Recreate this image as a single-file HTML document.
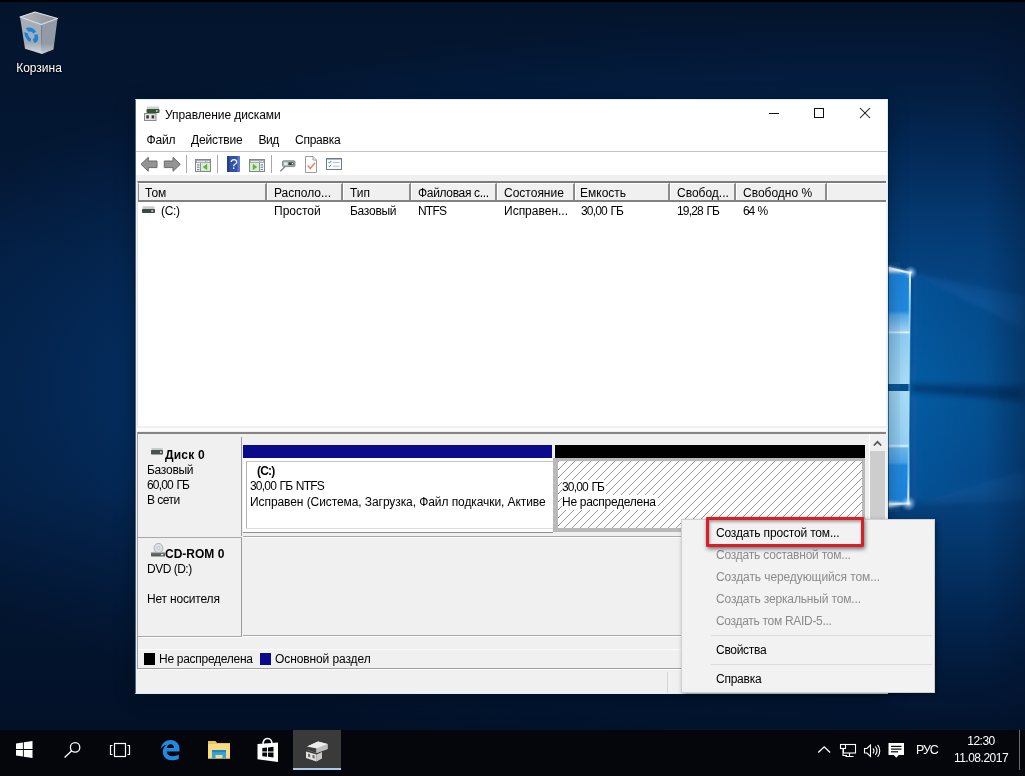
<!DOCTYPE html>
<html lang="ru">
<head>
<meta charset="utf-8">
<title>Управление дисками</title>
<style>
*{box-sizing:border-box;margin:0;padding:0}
html,body{width:1025px;height:776px;overflow:hidden;background:#07142e}
body{font-family:"Liberation Sans",sans-serif;font-size:12px;color:#000;position:relative}
.abs{position:absolute}
#desk{position:absolute;left:0;top:0;width:1025px;height:776px;overflow:hidden;background:#041936}
#desk .g1{position:absolute;left:0;top:0;width:1025px;height:776px;
 background:
  linear-gradient(to bottom, rgba(1,10,28,0) 63%, rgba(1,10,28,.55) 94%),
  linear-gradient(to bottom, rgba(2,12,30,.38) 0%, rgba(2,12,30,.22) 14%, rgba(2,12,30,0) 33%),
  radial-gradient(ellipse 1100px 375px at 870px 388px, #055291 0%, #054b89 12%, #05427f 30%, #043a72 48%, #032e61 64%, #04244d 78%, #041e42 90%, #041936 100%);}
#desk .topblack{position:absolute;left:0;top:0;width:1025px;height:3px;background:linear-gradient(#000 0,#000 1px,rgba(0,0,0,0) 3px)}
.t{position:absolute;white-space:nowrap;line-height:14px}
/* window */
#win{will-change:transform;position:absolute;left:135px;top:99px;width:753px;height:595px;background:#fff;border:1px solid #d8f1f8;border-left-color:#4f6a86;box-shadow:0 0 0 1px rgba(2,20,55,.55),0 4px 18px rgba(0,0,0,.35)}
#menubar{position:absolute;left:0;top:29px;width:751px;height:22px;background:#fff}
#tbline{position:absolute;left:0;top:51px;width:751px;height:1px;background:#c4c4c4}
#toolbar{position:absolute;left:0;top:52px;width:751px;height:23px;background:#fff}
#client{position:absolute;left:0;top:75px;width:751px;height:518px;background:#f0f0f0}
#list{position:absolute;left:1px;top:6px;width:749px;height:245px;background:#fff;border-top:2px solid #7c7c7c;border-left:1px solid #e3e3e3}
#lhead{position:absolute;left:0;top:0;width:748px;height:19px;background:#f0f0f0;border-bottom:2px solid #828282}
.hc{position:absolute;top:0;height:17px;border-left:1px solid #fff;border-top:1px solid #fff;border-right:2px solid #8c8c8c;background:#f0f0f0}
.hc span{position:absolute;left:6px;top:2px;line-height:14px;white-space:nowrap}
.r{top:21px}
.b{font-weight:bold}
.wb{background:#fff;line-height:15px;height:15px}
#lower{position:absolute;left:1px;top:257px;width:749px;height:237px;background:#f0f0f0;border-top:2px solid #858585;border-left:1px solid #a0a0a0;border-bottom:1px solid #a0a0a0}
.dlabel{position:absolute;left:1px;width:103px;background:#f0f0f0;border-right:1px solid #9c9c9c}
.bar{position:absolute;top:11px;height:13px}
.part{position:absolute;top:24px;height:74px;overflow:hidden}
.p1{background:#fff;border-bottom:1px solid #929292;height:75px}
.p1 .in{position:absolute;left:3px;top:3px;right:0;height:68px;border-left:1px solid #b0b0b0;border-top:1px solid #c6c6c0;border-bottom:1px solid #dedede}
.p2{border:3px solid #b9b9b9;border-left-width:5px;border-bottom-width:4px}
.hatch{background:#fff repeating-linear-gradient(135deg,#fff 0,#fff .05px,#949494 .05px,#949494 1.05px,#fff 1.05px,#fff 5.657px)}
.rowline{position:absolute;left:0;width:731px;height:2px;background:#fff;border-top:1px solid #a8a8a8}
#vscroll{position:absolute;left:731px;top:0;width:17px;height:204px;background:#f0f0f0;border-left:1px solid #fff}
#vscroll .thumb{position:absolute;left:0;top:17px;width:15px;height:70px;background:#cdcdcd}
#status{position:absolute;left:0;top:494px;width:751px;height:24px;background:#f0f0f0;border-top:1px solid #fff}
#ctx{will-change:transform;position:absolute;left:681px;top:519px;width:254px;height:174px;background:#f2f2f2;border:1px solid #cfcfcf;box-shadow:2px 2px 5px rgba(0,0,0,.4)}
.mi{left:34px}
.dis{color:#8b8b8b}
.msep{position:absolute;left:29px;width:221px;height:1px;background:#dcdcdc}
#redbox{position:absolute;left:706px;top:517px;width:158px;height:30px;border:3px solid #d81f26;border-radius:1px;box-shadow:1px 2px 4px rgba(0,0,0,.55), inset 1px 2px 3px rgba(0,0,0,.35)}
.dlab{will-change:transform;color:#fff;text-shadow:0 1px 2px rgba(0,0,0,.9),0 0 2px rgba(0,0,0,.7)}
#taskbar{position:absolute;left:0;top:730px;width:1025px;height:46px;background:#04060b}
#taskbar .active{position:absolute;left:293px;top:0;width:48px;height:40px;background:#3a3a3a;border-bottom:2px solid #a5cbee}
.tw{color:#fff;letter-spacing:-.5px;will-change:transform}
</style>
</head>
<body>
<div id="desk">
 <div class="g1"></div>
<svg class="abs" style="left:0;top:0" width="1025" height="776" viewBox="0 0 1025 776">
  <defs>
   <linearGradient id="pU" gradientUnits="userSpaceOnUse" x1="0" y1="273" x2="0" y2="384"><stop offset="0" stop-color="#1a84dc"/><stop offset=".34" stop-color="#2089df"/><stop offset=".38" stop-color="#58a9e7"/><stop offset=".52" stop-color="#a0d4f5"/><stop offset=".535" stop-color="#e6f6fe"/><stop offset=".55" stop-color="#8fcdf2"/><stop offset="1" stop-color="#aadef8"/></linearGradient>
   <linearGradient id="pL" gradientUnits="userSpaceOnUse" x1="0" y1="391" x2="0" y2="504"><stop offset="0" stop-color="#aadef8"/><stop offset=".47" stop-color="#98d2f4"/><stop offset=".487" stop-color="#e6f6fe"/><stop offset=".505" stop-color="#6ab8ec"/><stop offset=".63" stop-color="#4aa5e7"/><stop offset=".66" stop-color="#2089df"/><stop offset="1" stop-color="#1a84dc"/></linearGradient>
   <linearGradient id="bm" x1="0" y1="0" x2="1" y2="0"><stop offset="0" stop-color="#1478d2" stop-opacity=".30"/><stop offset=".5" stop-color="#1478d2" stop-opacity=".14"/><stop offset="1" stop-color="#1478d2" stop-opacity="0"/></linearGradient>
   <linearGradient id="edge" gradientUnits="userSpaceOnUse" x1="0" y1="272" x2="0" y2="504"><stop offset="0" stop-color="#f4fcff" stop-opacity="1"/><stop offset=".12" stop-color="#a8e2fb" stop-opacity=".85"/><stop offset=".3" stop-color="#a8e2fb" stop-opacity=".35"/><stop offset=".7" stop-color="#a8e2fb" stop-opacity=".35"/><stop offset=".88" stop-color="#a8e2fb" stop-opacity=".85"/><stop offset="1" stop-color="#f4fcff" stop-opacity="1"/></linearGradient>
   <radialGradient id="gl"><stop offset="0" stop-color="#fff" stop-opacity="1"/><stop offset=".3" stop-color="#cfe8ff" stop-opacity=".6"/><stop offset="1" stop-color="#6bb6ff" stop-opacity="0"/></radialGradient>
   <linearGradient id="vg" x1="0" y1="0" x2="1" y2="0"><stop offset="0" stop-color="#03102a" stop-opacity="0"/><stop offset="1" stop-color="#03102a" stop-opacity=".3"/></linearGradient>
   <filter id="bl"><feGaussianBlur stdDeviation="3"/></filter><filter id="bl2" x="-20%" y="-100%" width="140%" height="300%"><feGaussianBlur stdDeviation="1.600"/></filter>
  </defs>
  <g filter="url(#bl)">
   <path d="M910 273 L1025 310 L1025 486 L908 504 Z" fill="url(#bm)"/>
   <path d="M911 272 L1025 296 L1025 330 Z" fill="#3a93e6" opacity=".12"/>
   <path d="M909 506 L1025 470 L1025 500 Z" fill="#3a93e6" opacity=".10"/>
   <path d="M911 383 L1025 386 L1025 402 L911 393 Z" fill="#04204a" opacity=".5"/>
  </g>
  <rect x="985" y="0" width="40" height="776" fill="url(#vg)"/>
  <path d="M860 261.500 L910.500 273 L909.500 384 L860 384 Z" fill="url(#pU)"/>
  <path d="M860 391 L909.500 391 L908.300 503.500 L860 505 Z" fill="url(#pL)"/>
  <rect x="860" y="262" width="40" height="250" fill="#3b8fd8" opacity=".12"/>
  <g filter="url(#bl2)">
   <path d="M870 262 L911 272.500 L870 272 Z" fill="#e8f8ff" opacity=".95"/>
   <path d="M870 500 L909 503.500 L870 511 Z" fill="#e8f8ff" opacity=".9"/>
  </g>
  <path d="M860 261.500 L910.500 273" stroke="#eefaff" stroke-width="2.200" opacity=".95"/>
  <path d="M860 505 L908.500 503.500" stroke="#e6f6ff" stroke-width="1.800" opacity=".9"/>
  <path d="M910 272.500 L908.300 504" stroke="url(#edge)" stroke-width="2"/>
  <circle cx="910.500" cy="272.500" r="7" fill="url(#gl)"/>
  <circle cx="908.500" cy="503.500" r="8" fill="url(#gl)"/>
 </svg>
 <div class="topblack"></div>
</div>
<div id="win">
 <!-- title bar -->
 <svg class="abs" style="left:8px;top:6px" width="17" height="16" viewBox="0 0 17 16">
  <rect x="3" y="0.5" width="12" height="3" fill="#d9c9d3"/>
  <rect x="2.5" y="3" width="13" height="4" rx="1" fill="#2d5a33"/>
  <rect x="12" y="4.3" width="1.6" height="1.4" fill="#e8f4e8"/>
  <rect x="0.5" y="7.5" width="11.5" height="7" fill="#e4e4e4" stroke="#8a8a8a" stroke-width="1"/>
  <rect x="2.3" y="9.3" width="2.6" height="3.2" fill="#3a3a3a"/>
  <rect x="7.6" y="9.3" width="2.6" height="3.2" fill="#3a3a3a"/>
 </svg>
 <div class="t" style="left:29px;top:8px;letter-spacing:-.07px">Управление дисками</div>
 <svg class="abs" style="left:626px;top:-1px" width="127" height="30" viewBox="0 0 127 30">
  <g stroke="#111" stroke-width="1" fill="none" shape-rendering="crispEdges">
   <line x1="7" y1="14.5" x2="17" y2="14.5"/>
   <rect x="52.5" y="9.5" width="9" height="9"/>
  </g>
  <g stroke="#111" stroke-width="1.05" fill="none">
   <line x1="98" y1="9" x2="108" y2="19"/><line x1="108" y1="9" x2="98" y2="19"/>
  </g>
 </svg>
 <div id="menubar">
  <div class="t" style="left:10.5px;top:4px;letter-spacing:-.2px">Файл</div>
  <div class="t" style="left:55px;top:4px;letter-spacing:-.15px">Действие</div>
  <div class="t" style="left:122.5px;top:4px;letter-spacing:-.5px">Вид</div>
  <div class="t" style="left:159px;top:4px;letter-spacing:-.24px">Справка</div>
 </div>
 <div id="tbline"></div>
 <div id="toolbar">
  <svg class="abs" style="left:0;top:0" width="220" height="23" viewBox="0 0 220 23">
   <!-- back / forward arrows -->
   <path d="M5 12.3 L12.3 5.3 V9 H21 V15.6 H12.3 V19.3 Z" fill="#949494" stroke="#6a6a6a" stroke-width="1" stroke-linejoin="round"/>
   <path d="M44.3 12.3 L37 5.3 V9 H28.3 V15.6 H37 V19.3 Z" fill="#949494" stroke="#6a6a6a" stroke-width="1" stroke-linejoin="round"/>
   <rect x="50" y="3" width="1" height="18" fill="#a9a9a9"/>
   <!-- show/hide tree -->
   <g>
    <rect x="59.500" y="7.500" width="15" height="12" fill="#f6f7f8" stroke="#7f8790"/>
    <rect x="60" y="8" width="14" height="3" fill="#a4adb6"/>
    <rect x="61" y="9" width="8" height="1" fill="#e4e8ec"/><rect x="70.500" y="9" width="1" height="1" fill="#fff"/><rect x="72.200" y="9" width="1" height="1" fill="#fff"/>
    <rect x="65" y="11" width="9" height="8" fill="#d9efc9"/>
    <line x1="64.500" y1="11" x2="64.500" y2="19" stroke="#8b939b"/>
    <rect x="61" y="12.300" width="2.500" height="1.200" fill="#7f8790"/><rect x="61" y="14.600" width="2.500" height="1.200" fill="#7f8790"/><rect x="61" y="16.900" width="2.500" height="1.200" fill="#7f8790"/>
    <path d="M67.300 15 L70.800 12.400 V17.600 Z" fill="#5fb548" stroke="#3d962c" stroke-width=".5"/>
   </g>
   <rect x="81" y="3" width="1" height="18" fill="#a9a9a9"/>
   <!-- help -->
   <g>
    <rect x="91" y="4" width="13" height="16" fill="#3151ab"/>
    <rect x="91" y="4" width="2.500" height="16" fill="#24407f"/>
    <rect x="101.500" y="4" width="2.500" height="16" fill="#5b79cc"/>
    <text x="98" y="16.800" font-family="Liberation Sans" font-size="14" fill="#f4f6ff" text-anchor="middle">?</text>
   </g>
   <!-- show/hide action pane -->
   <g>
    <rect x="113.500" y="7.500" width="15" height="12" fill="#f6f7f8" stroke="#7f8790"/>
    <rect x="114" y="8" width="14" height="3" fill="#a4adb6"/>
    <rect x="115" y="9" width="8" height="1" fill="#e4e8ec"/><rect x="124.500" y="9" width="1" height="1" fill="#fff"/><rect x="126.200" y="9" width="1" height="1" fill="#fff"/>
    <rect x="114" y="11" width="9" height="8" fill="#d9efc9"/>
    <line x1="123.500" y1="11" x2="123.500" y2="19" stroke="#8b939b"/>
    <rect x="124.600" y="12.300" width="2.500" height="1.200" fill="#7f8790"/><rect x="124.600" y="14.600" width="2.500" height="1.200" fill="#7f8790"/><rect x="124.600" y="16.900" width="2.500" height="1.200" fill="#7f8790"/>
    <path d="M120.700 15 L117.200 12.400 V17.600 Z" fill="#5fb548" stroke="#3d962c" stroke-width=".5"/>
   </g>
   <rect x="135" y="3" width="1" height="18" fill="#a9a9a9"/>
   <!-- disk + magnifier -->
   <g>
    <line x1="144.300" y1="19.200" x2="149" y2="14.800" stroke="#7d8a96" stroke-width="1.300"/>
    <rect x="146.500" y="8.800" width="12.500" height="5.800" rx="1" fill="#a3b1ab" stroke="#6d7a75" stroke-width=".8"/>
    <rect x="148" y="10.300" width="3.500" height="2.800" fill="#e4ebef"/>
    <rect x="152.500" y="10.300" width="5" height="2.800" fill="#33453a"/>
    <rect x="155.800" y="11" width="1.200" height="1.400" fill="#d8f6d8"/>
   </g>
   <!-- page with check -->
   <g>
    <path d="M169.500 4.500 H177 L180.500 8 V20.500 H169.500 Z" fill="#fff" stroke="#9c9c9c"/>
    <path d="M177 4.500 V8 H180.500" fill="#f0f0f0" stroke="#9c9c9c"/>
    <path d="M171.800 13.500 L174.300 16.500 L179 10.800" fill="none" stroke="#e88a5c" stroke-width="1.500"/>
   </g>
   <!-- checklist -->
   <g>
    <rect x="190.500" y="6.500" width="15" height="11" fill="#f9fbfd" stroke="#6f7b88"/>
    <rect x="190.500" y="6.500" width="15" height="1" fill="#6f7b88"/>
    <path d="M192.500 10 l1 1 l1.700 -2" fill="none" stroke="#3b86d6" stroke-width="1"/>
    <path d="M192.500 13.800 l1 1 l1.700 -2" fill="none" stroke="#3b86d6" stroke-width="1"/>
    <rect x="197" y="10" width="6.500" height="1" fill="#b7c2cd"/>
    <rect x="197" y="13.800" width="6.500" height="1" fill="#b7c2cd"/>
   </g>
  </svg>
 </div>
 <div id="client">
  <!-- list view -->
  <div id="list">
   <div id="lhead">
    <div class="hc" style="left:0;width:129px;border-left:1px solid #8a8a8a"><span>Том</span></div>
    <div class="hc" style="left:129px;width:76px"><span>Располо...</span></div>
    <div class="hc" style="left:205px;width:68px"><span>Тип</span></div>
    <div class="hc" style="left:273px;width:86px"><span style="letter-spacing:-.33px">Файловая с...</span></div>
    <div class="hc" style="left:359px;width:78px"><span>Состояние</span></div>
    <div class="hc" style="left:437px;width:95px"><span style="left:4px">Емкость</span></div>
    <div class="hc" style="left:532px;width:66px"><span>Свобод...</span></div>
    <div class="hc" style="left:598px;width:91px"><span>Свободно %</span></div>
    <div class="hc" style="left:689px;width:60px;border-right:none"></div>
   </div>
   <svg class="abs" style="left:4px;top:23px" width="13" height="8" viewBox="0 0 13 8">
    <rect x="0.5" y="0.3" width="12" height="3" fill="#c9cdca"/>
    <rect x="0" y="3" width="13" height="4" rx=".8" fill="#3f4742"/>
    <rect x="9.3" y="4.3" width="2" height="1.4" fill="#d6f3d6"/>
   </svg>
   <div class="t r" style="left:23px;letter-spacing:-.35px">(C:)</div>
   <div class="t r" style="left:136px">Простой</div>
   <div class="t r" style="left:212px;letter-spacing:-.27px">Базовый</div>
   <div class="t r" style="left:280px;letter-spacing:-.8px">NTFS</div>
   <div class="t r" style="left:366px">Исправен...</div>
   <div class="t r" style="left:443px;letter-spacing:-.85px;word-spacing:1.2px">30,00 ГБ</div>
   <div class="t r" style="left:539px;letter-spacing:-.85px;word-spacing:1.2px">19,28 ГБ</div>
   <div class="t r" style="left:605px;letter-spacing:-1.1px;word-spacing:1px">64 %</div>
  </div>
  <div class="abs" style="left:1px;top:253px;width:749px;height:3px;background:#fbfbfb"></div>
  <!-- lower graphical pane -->
  <div id="lower">
   <!-- Disk 0 row -->
   <div class="dlabel" style="top:3px;height:99px">
    <svg class="abs" style="left:12px;top:11px" width="12" height="8" viewBox="0 0 16 8" preserveAspectRatio="none">
     <rect x="0.500" y="0" width="15" height="2.500" fill="#c9cdca"/>
     <rect x="0" y="2" width="16" height="4.500" rx="1" fill="#4b524d"/>
     <rect x="12" y="3.400" width="2.200" height="1.500" fill="#d6f3d6"/>
    </svg>
    <div class="t b" style="left:26px;top:11px;letter-spacing:.2px">Диск 0</div>
    <div class="t" style="left:8px;top:26px;letter-spacing:-.27px">Базовый</div>
    <div class="t" style="left:8px;top:41px;letter-spacing:-.85px;word-spacing:1.2px">60,00 ГБ</div>
    <div class="t" style="left:8px;top:56px;letter-spacing:-.5px">В сети</div>
   </div>
   <div class="bar" style="left:105px;width:309px;background:#0a0a8a"></div>
   <div class="bar" style="left:417px;width:310px;background:#000"></div>
   <div class="part p1" style="left:105px;width:310px"><div class="in"></div>
    <div class="t b" style="left:14px;top:6px;letter-spacing:-.8px">(C:)</div>
    <div class="t" style="left:7px;top:21px;letter-spacing:-.8px;word-spacing:1px">30,00 ГБ NTFS</div>
    <div class="t" style="left:7px;top:37px;letter-spacing:-.08px;width:295px;overflow:hidden">Исправен (Система, Загрузка, Файл подкачки, Активен, Аварийный дамп)</div>
   </div>
   <div class="part p2 hatch" style="left:415px;width:312px">
    <div class="t wb" style="left:4px;top:19px;width:44px;letter-spacing:-.85px;word-spacing:1.2px">30,00 ГБ</div>
    <div class="t wb" style="left:4px;top:34px;width:96px;letter-spacing:-.28px">Не распределена</div>
   </div>
   <div class="rowline" style="top:103px;width:104px"></div><div class="rowline" style="top:102px;left:105px;width:626px"></div>
   <!-- CD-ROM 0 row -->
   <div class="dlabel" style="top:104px;height:98px">
    <svg class="abs" style="left:12px;top:5px" width="14" height="15" viewBox="0 0 16 16" preserveAspectRatio="none">
     <circle cx="8.500" cy="5.500" r="5" fill="#dfe3e6" stroke="#8e979e" stroke-width=".8"/>
     <circle cx="8.500" cy="5.500" r="1.600" fill="#fff" stroke="#8e979e" stroke-width=".7"/>
     <rect x="0" y="9.500" width="16" height="5" rx="1" fill="#5a615c"/>
     <rect x="0" y="9.500" width="16" height="1.400" fill="#a9b0ab"/>
     <rect x="11.500" y="11.700" width="2.500" height="1.400" fill="#d6f3d6"/>
    </svg>
    <div class="t b" style="left:26px;top:9px">CD-ROM 0</div>
    <div class="t" style="left:8px;top:24px;letter-spacing:-.5px">DVD (D:)</div>
    <div class="t" style="left:8px;top:54px;letter-spacing:-.18px">Нет носителя</div>
   </div>
   <div class="rowline" style="top:202px;width:104px"></div><div class="rowline" style="top:201px;left:105px;width:626px"></div>
   <!-- scrollbar -->
   <div id="vscroll">
    <svg class="abs" style="left:3px;top:6px" width="9" height="7" viewBox="0 0 9 7"><path d="M0.800 5.500 L4.500 1.800 L8.200 5.500" fill="none" stroke="#555" stroke-width="1.700"/></svg>
    <div class="thumb"></div>
   </div>
   <!-- legend -->
   <div class="abs" style="left:0;top:215px;width:748px;height:1px;background:#fbfbfb"></div>
   <div class="abs" style="left:6px;top:219px;width:11px;height:12px;background:#000"></div>
   <div class="t" style="left:21px;top:218px;letter-spacing:-.28px">Не распределена</div>
   <div class="abs" style="left:122px;top:219px;width:11px;height:12px;background:#0a0a8a"></div>
   <div class="t" style="left:137px;top:218px;letter-spacing:-.1px">Основной раздел</div>
  </div>
  <!-- status bar -->
  <div id="status">
   <div class="abs" style="left:531px;top:2px;width:1px;height:21px;background:#d4d4d4"></div>
   <div class="abs" style="left:700px;top:2px;width:1px;height:20px;background:#d0d0d0"></div>
  </div>
 </div>
</div>
<!--WINEND-->
<div id="ctx">
 <div class="t mi" style="top:6px;letter-spacing:-.17px">Создать простой том...</div>
 <div class="t mi dis" style="top:28px;letter-spacing:-.21px">Создать составной том...</div>
 <div class="t mi dis" style="top:50px;letter-spacing:-.09px">Создать чередующийся том...</div>
 <div class="t mi dis" style="top:72px;letter-spacing:-.15px">Создать зеркальный том...</div>
 <div class="t mi dis" style="top:94px;letter-spacing:-.3px">Создать том RAID-5...</div>
 <div class="msep" style="top:115px"></div>
 <div class="t mi" style="top:123px;letter-spacing:-.29px">Свойства</div>
 <div class="msep" style="top:144px"></div>
 <div class="t mi" style="top:152px;letter-spacing:-.24px">Справка</div>
</div>
<div id="redbox"></div>
<!--MENUEND-->
<!-- recycle bin -->
<svg class="abs" style="left:16px;top:8px" width="48" height="50" viewBox="0 0 48 50">
 <defs>
  <linearGradient id="binL" x1="0" y1="0" x2="0" y2="1"><stop offset="0" stop-color="#aeb5bd"/><stop offset=".7" stop-color="#aab2bb"/><stop offset=".86" stop-color="#c6ccd2"/><stop offset="1" stop-color="#e2e6e9"/></linearGradient>
  <linearGradient id="binR" x1="0" y1="0" x2="0" y2="1"><stop offset="0" stop-color="#98a1ab"/><stop offset=".7" stop-color="#97a0aa"/><stop offset=".88" stop-color="#b4bbc2"/><stop offset="1" stop-color="#d5dade"/></linearGradient>
  <linearGradient id="binT" x1="0" y1="0" x2="1" y2="0"><stop offset="0" stop-color="#b4b9be"/><stop offset="1" stop-color="#8a9097"/></linearGradient>
 </defs>
 <path d="M4 9 L25.300 16.500 L26 46 L9 40.800 Z" fill="url(#binL)" opacity=".96"/>
 <path d="M25.300 16.500 L41.500 10.500 L37.500 41.500 L26 46 Z" fill="url(#binR)" opacity=".96"/>
 <path d="M4 9 L19 4 L41.500 10.500 L25.300 16.500 Z" fill="url(#binT)" stroke="#dfe3e7" stroke-width="1.100" stroke-linejoin="round"/>
 <g transform="translate(15.300 27.300) skewY(17)">
  <ellipse cx="0" cy="0" rx="5" ry="5.600" fill="none" stroke="#1c82d8" stroke-width="3.800" stroke-dasharray="8.300 2.850" transform="rotate(-25)"/>
 </g>
</svg>
<div class="t dlab" style="left:16px;top:61px;width:46px;text-align:center">Корзина</div>
<!-- taskbar -->
<div id="taskbar">
 <div class="active"></div>
 <!-- start -->
 <svg class="abs" style="left:16px;top:11px" width="17" height="17" viewBox="0 0 17 17">
  <path d="M0 2.400 L6.900 1.400 V8 H0 Z M7.800 1.250 L16.500 0 V8 H7.800 Z M0 8.900 H6.900 V15.500 L0 14.500 Z M7.800 8.900 H16.500 V17 L7.800 15.700 Z" fill="#fff"/>
 </svg>
 <!-- search -->
 <svg class="abs" style="left:62px;top:9px" width="20" height="20" viewBox="0 0 20 20">
  <circle cx="13.100" cy="8.400" r="4.700" fill="none" stroke="#fff" stroke-width="1.300"/>
  <line x1="9.700" y1="11.800" x2="2.600" y2="18.500" stroke="#fff" stroke-width="1.300"/>
 </svg>
 <!-- task view -->
 <svg class="abs" style="left:108px;top:11px" width="24" height="18" viewBox="0 0 24 18">
  <rect x="6.500" y="2.500" width="11" height="13" fill="none" stroke="#fff" stroke-width="1.200"/>
  <path d="M4.500 4.500 H2.500 V13.500 H4.500 M19.500 4.500 H21.500 V13.500 H19.500" fill="none" stroke="#fff" stroke-width="1.200"/>
 </svg>
 <!-- edge -->
 <svg class="abs" style="left:159px;top:9px" width="22" height="22" viewBox="0 0 22 22">
  <path d="M1.500 10.500 C2.500 4 7 1 11.500 1 C17.500 1 20.500 5.500 20.500 10 V12.500 H7.800 C8 15.500 10.500 17.200 13.500 17.200 C16 17.200 18 16.500 19.800 15.500 V19.800 C17.800 20.800 15.500 21.300 13 21.300 C7.500 21.300 3.800 17.800 3.800 12.800 C3.800 9.800 5.300 7.300 7.800 5.800 C4.800 6.300 2.800 8 1.500 10.500 Z M7.900 9 H15 C15 6.800 13.700 5.200 11.600 5.200 C9.500 5.200 8.200 6.900 7.900 9 Z" fill="#2189e0"/>
 </svg>
 <!-- explorer -->
 <svg class="abs" style="left:207px;top:10px" width="24" height="20" viewBox="0 0 24 20">
  <path d="M1 1 H8.500 L10 3 H23 V18.500 H1 Z" fill="#e9c562"/>
  <rect x="1" y="4" width="22" height="14.500" fill="#f7dc84"/>
  <path d="M5 18.500 V11.500 H19 V18.500 H15.500 V15 H8.500 V18.500 Z" fill="#35a3dd"/>
  <rect x="5" y="10" width="14" height="2.200" fill="#1f86c4"/>
 </svg>
 <!-- store -->
 <svg class="abs" style="left:256px;top:7px" width="23" height="25" viewBox="0 0 23 25">
  <path d="M7 7.500 C7 3.500 9 1.500 11.500 1.500 C14 1.500 16 3.500 16 7.500" fill="none" stroke="#fff" stroke-width="1.400"/>
  <path d="M1.500 7 L22 5.500 V25 L1.500 22.300 Z" fill="#fff"/>
  <path d="M6.300 11 L11 10.500 V14.500 H6.300 Z M12 10.400 L17.500 9.800 V14.500 H12 Z M6.300 15.500 H11 V19.700 L6.300 19.200 Z M12 15.500 H17.500 V20.500 L12 19.800 Z" fill="#05070c"/>
 </svg>
 <!-- disk mgmt app -->
 <svg class="abs" style="left:304px;top:10px" width="26" height="22" viewBox="0 0 26 22">
  <path d="M3 6.500 L14 1.500 L23.500 4 L23.500 9 L12.500 13 L3 10 Z" fill="#d9d9d9"/>
  <path d="M3 6.500 L14 1.500 L23.500 4 L12.500 8.500 Z" fill="#ececec"/>
  <path d="M3 6.500 L12.500 8.500 V13 L3 10 Z" fill="#3c3c3c"/>
  <path d="M12.500 8.500 L23.500 4 V9 L12.500 13 Z" fill="#bdbdbd"/>
  <path d="M2 11.500 L12.500 14.500 V21.500 L2 18 Z" fill="#e3e3e3"/>
  <path d="M12.500 14.500 L18 12 V18.500 L12.500 21.500 Z" fill="#c9c9c9"/>
  <path d="M4 13.500 L6.200 14.200 V17.500 L4 16.800 Z M8.500 14.800 L10.700 15.500 V18.800 L8.500 18.100 Z" fill="#6d6d6d"/>
 </svg>
 <!-- tray -->
 <svg class="abs" style="left:816px;top:12px" width="92" height="18" viewBox="0 0 92 18">
  <path d="M2.300 10.500 L8.200 4.800 L14.100 10.500" fill="none" stroke="#fff" stroke-width="1.300"/>
  <!-- network -->
  <g fill="none" stroke="#fff" stroke-width="1.100">
   <rect x="27.500" y="2.500" width="12" height="8.500"/>
   <path d="M33.500 11 V14.500 M29.500 14.500 H37.500"/>
   <rect x="24.500" y="2.500" width="5" height="4" fill="#05070c"/>
   <path d="M27 6.500 V13.500 H31"/>
  </g>
  <!-- volume -->
  <g fill="none" stroke="#fff" stroke-width="1.100">
   <path d="M48.500 6.500 H51 L54.500 3 V14.500 L51 11 H48.500 Z"/>
   <path d="M57 6.300 C58.200 7.800 58.200 9.800 57 11.300"/>
   <path d="M59.300 4.500 C61.300 7 61.300 10.500 59.300 13"/>
   <path d="M61.600 2.800 C64.500 6.300 64.500 11.300 61.600 14.800"/>
  </g>
  <!-- notifications -->
  <path d="M72.500 1 H88 V13 H82.800 L80.300 15.800 L77.800 13 H72.500 Z" fill="#fff"/>
  <g fill="#05070c"><rect x="75" y="3.800" width="10.500" height="1.200"/><rect x="75" y="6.500" width="10.500" height="1.200"/><rect x="75" y="9.200" width="7" height="1.200"/></g>
 </svg>
 <div class="t tw" style="left:915.5px;top:13px;font-size:12.5px;letter-spacing:-1.1px">РУС</div>
 <div class="t tw" style="left:944px;top:4px;width:74px;text-align:center">12:30</div>
 <div class="t tw" style="left:944px;top:21px;width:74px;text-align:center">11.08.2017</div>
 <div class="abs" style="left:1019px;top:0;width:1px;height:40px;background:#6b6b6b"></div>
</div>
<!--TASKEND-->
</body>
</html>
